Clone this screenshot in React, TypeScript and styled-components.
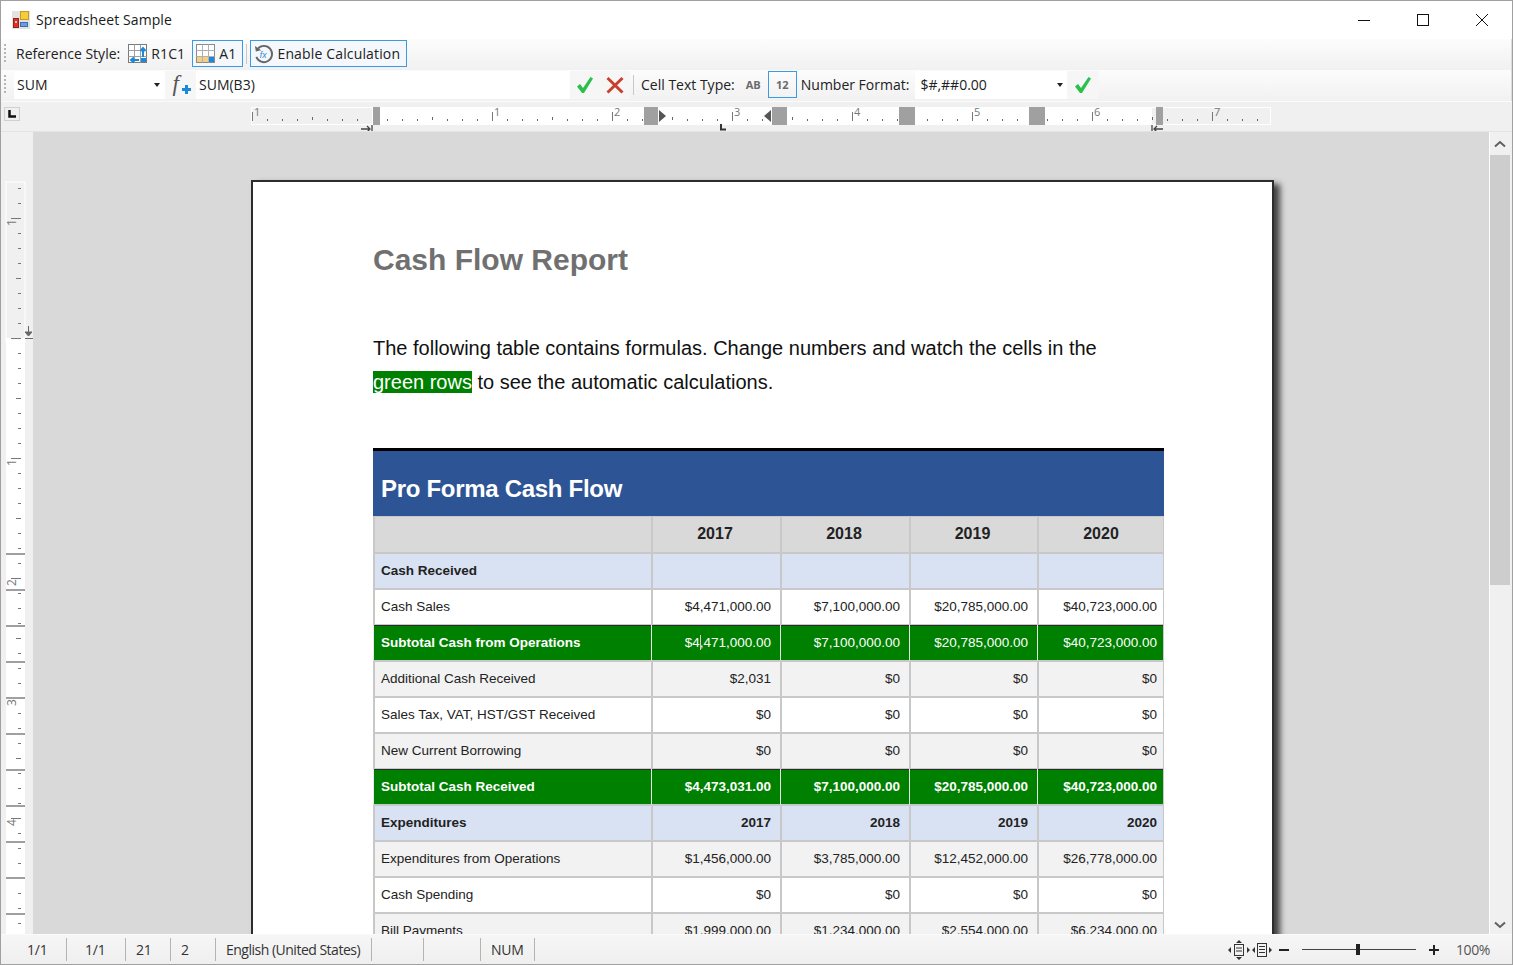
import React from 'react';
import styled, { createGlobalStyle } from 'styled-components';

const GlobalStyle = createGlobalStyle`
  html, body { margin: 0; padding: 0; height: 100%; overflow: hidden; }
  #root { height: 100%; }
`;

const UI_FONT = `"Open Sans", "Noto Sans", "Liberation Sans", sans-serif`;
const DOC_FONT = `"Liberation Sans", Arial, sans-serif`;

const Window = styled.div`
  width: 1513px;
  height: 965px;
  box-sizing: border-box;
  border: 1px solid #a0a0a0;
  display: flex;
  flex-direction: column;
  background: #f0f0f0;
  font-family: ${UI_FONT};
  overflow: hidden;
`;

const TitleBar = styled.div`
  height: 38px;
  flex: none;
  box-sizing: border-box;
  background: #fff;
  display: flex;
  align-items: center;
  padding: 0 1px 1px 11px;
  color: #1a1a1a;
  font-size: 14px;
`;

const TitleText = styled.span`
  margin-left: 6px;
  flex: 1;
  letter-spacing: 0.1px;
`;

const WinButton = styled.div`
  width: 59px;
  height: 37px;
  display: flex;
  align-items: center;
  justify-content: center;
`;

const Toolbar = styled.div`
  height: 31px;
  flex: none;
  box-sizing: border-box;
  display: flex;
  align-items: center;
  padding-bottom: 2px;
  background: linear-gradient(#fcfcfc, #f1f1f1);
  border-right: 1px solid #dcdcdc;
  color: #222;
  font-size: 14px;
  white-space: nowrap;
`;

const Grip = styled.div`
  width: 2px;
  height: 20px;
  margin: 0 8px 0 3px;
  flex: none;
  background: repeating-linear-gradient(#b5b5b5 0 2px, transparent 2px 4px);
`;

const ToolLabel = styled.span<{ $ml?: number; $mr?: number }>`
  margin-left: ${p => p.$ml ?? 0}px;
  margin-right: ${p => p.$mr ?? 0}px;
`;

const ToolButton = styled.div<{ $active?: boolean; $ml?: number }>`
  height: 27px;
  box-sizing: border-box;
  display: flex;
  align-items: center;
  gap: 3px;
  padding: 0 6px 0 2px;
  margin-left: ${p => p.$ml ?? 0}px;
  border: 1px solid ${p => (p.$active ? '#3a9ae2' : 'transparent')};
  background: ${p => (p.$active ? '#f4f8fc' : 'transparent')};
  letter-spacing: 0.15px;
`;

const Sep = styled.div<{ $mx?: number }>`
  width: 1px;
  height: 20px;
  background: #c8c8c8;
  margin: 0 ${p => p.$mx ?? 3}px;
  flex: none;
`;

const Field = styled.div<{ $w: number; $pr?: number }>`
  width: ${p => p.$w}px;
  height: 28px;
  flex: none;
  box-sizing: border-box;
  background: #fff;
  display: flex;
  align-items: center;
  justify-content: space-between;
  padding: 0 ${p => p.$pr ?? 4}px 0 3px;
`;

const Caret = styled.div`
  width: 0;
  height: 0;
  border-left: 3.5px solid transparent;
  border-right: 3.5px solid transparent;
  border-top: 4px solid #222;
`;

const IconSlot = styled.div<{ $w: number }>`
  width: ${p => p.$w}px;
  height: 28px;
  flex: none;
  display: flex;
  align-items: center;
  justify-content: center;
  background: #f6f6f6;
`;

const TypeButton = styled.div<{ $active?: boolean }>`
  width: 29px;
  height: 27px;
  box-sizing: border-box;
  display: flex;
  align-items: center;
  justify-content: center;
  color: #6a6a6a;
  font-size: 11px;
  font-weight: 700;
  border: 1px solid ${p => (p.$active ? '#3a9ae2' : 'transparent')};
`;

const RulerRow = styled.div`
  height: 31px;
  flex: none;
  display: flex;
  background: #f0f0f0;
  border-top: 1px solid #fbfbfb;
  border-bottom: 1px solid #e4e4e4;
  box-sizing: border-box;
`;

const TabStop = styled.div`
  width: 16px;
  height: 14px;
  margin: 5px 0 0 3px;
  box-sizing: border-box;
  border: 1px solid #fff;
  background: #f0f0f0;
  display: flex;
  align-items: center;
  justify-content: center;
  outline: 1px solid #d0d0d0;
  outline-offset: -1px;
`;

const Main = styled.div`
  flex: 1;
  min-height: 0;
  display: flex;
`;

const SideRuler = styled.div`
  width: 32px;
  flex: none;
  background: #f0f0f0;
`;

const Canvas = styled.div`
  flex: 1;
  min-width: 0;
  background: #d9d9d9;
  overflow: hidden;
  padding: 48px 0 0 218px;
`;

const Page = styled.div`
  width: 1023px;
  height: 1200px;
  box-sizing: border-box;
  background: #fff;
  border: 2px solid #2c2c2c;
  box-shadow: 6px 4px 6px rgba(0, 0, 0, 0.7);
  padding: 60px 108px 0 120px;
  font-family: ${DOC_FONT};
`;

const ReportTitle = styled.h1`
  margin: 0;
  color: #707070;
  font-size: 30px;
  line-height: 36px;
  font-weight: 700;
`;

const Intro = styled.p`
  margin: 53px 0 0;
  color: #111;
  font-size: 20px;
  line-height: 34px;
  width: 780px;
`;

const Highlight = styled.span`
  background: #008000;
  color: #fff;
`;

const Table = styled.div`
  margin-top: 49px;
  width: 791px;
  display: grid;
  grid-template-columns: 278px 129px 129px 128px 127px;
  border-top: 3px solid #000;
`;

const TableTitle = styled.div`
  grid-column: 1 / -1;
  height: 65px;
  box-sizing: border-box;
  background: #2d5494;
  color: #fff;
  font-size: 24px;
  font-weight: 700;
  padding: 22px 0 0 8px;
  line-height: 32px;
  letter-spacing: -0.3px;
`;

type Tone = 'head' | 'section' | 'plain' | 'alt' | 'total';

const toneBg: Record<Tone, string> = {
  head: '#d9d9d9',
  section: '#d9e2f3',
  plain: '#ffffff',
  alt: '#f2f2f2',
  total: '#008000',
};

const Cell = styled.div<{ $tone: Tone; $right?: boolean; $bold?: boolean; $center?: boolean; $last?: boolean }>`
  position: relative;
  height: ${p => (p.$tone === 'head' ? 37 : 36)}px;
  box-sizing: border-box;
  background: ${p => toneBg[p.$tone]};
  color: ${p => (p.$tone === 'total' ? '#fff' : '#222')};
  font-size: ${p => (p.$tone === 'head' ? 16 : 13.5)}px;
  font-weight: ${p => (p.$bold ? 700 : 400)};
  display: flex;
  align-items: center;
  justify-content: ${p => (p.$center ? 'center' : p.$right ? 'flex-end' : 'flex-start')};
  padding: 0 ${p => (p.$last ? 6 : 9)}px 0 7px;
  border-left: 1px solid ${p => (p.$tone === 'total' ? '#e8e8e8' : '#c8c8c8')};
  border-bottom: 1px solid #c8c8c8;
  border-right: ${p => (p.$last ? '1px solid #c8c8c8' : '0')};
  box-shadow: ${p => (p.$tone === 'total' ? 'inset 0 1px 0 #2c2c2c' : 'inset 1px 1px 0 #c8c8c8')};
  white-space: nowrap;
`;

const TextCursor = styled.div`
  position: absolute;
  left: 48px;
  top: 10px;
  width: 1px;
  height: 15px;
  background: #e8c0e0;
`;

const Scrollbar = styled.div`
  width: 20px;
  flex: none;
  margin-right: 2px;
  background: #f0f0f0;
  display: flex;
  flex-direction: column;
  border-left: 1px solid #fff;
`;

const ScrollArrow = styled.div<{ $h: number }>`
  height: ${p => p.$h}px;
  flex: none;
  display: flex;
  align-items: center;
  justify-content: center;
`;

const ScrollThumb = styled.div`
  height: 430px;
  flex: none;
  background: #cdcdcd;
`;

const ScrollRest = styled.div`
  flex: 1;
`;

const StatusBar = styled.div`
  height: 29px;
  flex: none;
  display: flex;
  align-items: center;
  background: linear-gradient(#f6f6f6, #efefef);
  border-top: 1px solid #fafafa;
  color: #333;
  font-size: 14px;
  letter-spacing: -0.2px;
`;

const StatusCell = styled.div<{ $w: number; $pl?: number; $narrow?: boolean }>`
  width: ${p => p.$w}px;
  height: 23px;
  box-sizing: border-box;
  flex: none;
  border-right: 1px solid #b4b4b4;
  display: flex;
  align-items: center;
  padding-left: ${p => p.$pl ?? 10}px;
  white-space: nowrap;
  letter-spacing: ${p => (p.$narrow ? -0.5 : -0.2)}px;
`;

const StatusRight = styled.div`
  margin-left: auto;
  display: flex;
  align-items: center;
  padding-right: 22px;
`;

const FitPageSvg = styled.svg`
  margin-right: 2px;
`;

const ZoomMinus = styled.svg`
  margin-left: 6px;
`;

const ZoomTrack = styled.div`
  position: relative;
  width: 114px;
  height: 1px;
  background: #444;
  margin: 0 12px 0 12px;
`;

const ZoomThumb = styled.div`
  position: absolute;
  left: 54px;
  top: -5px;
  width: 4px;
  height: 11px;
  background: #222;
`;

const ZoomValue = styled.span`
  margin-left: 16px;
  color: #555;
  letter-spacing: -0.4px;
`;

const AppIcon = () => (
  <svg width="18" height="18" viewBox="0 0 18 18">
    <rect x="0" y="0" width="18" height="18" fill="#e2e2e2" />
    <rect x="8.500" y="0.500" width="8" height="8" fill="#f6cb3c" stroke="#c89a20" />
    <rect x="1.500" y="7.500" width="5" height="9" fill="#d8342a" stroke="#9c2018" />
    <rect x="3" y="10" width="2" height="2" fill="#f3c0b8" />
    <rect x="8.500" y="11.500" width="7" height="4" fill="#6f9ce0" stroke="#3d6cb0" />
  </svg>
);

const R1C1Icon = () => (
  <svg width="21" height="21" viewBox="0 0 21 21">
    <rect x="1.500" y="1.500" width="18" height="18" fill="#fff" stroke="#7a7a7a" />
    <path d="M1.500 7.500h18M1.500 13.500h18M7.500 1.500v18M13.500 1.500v18" stroke="#a0a0a0" />
    <path d="M16 14V6M13.500 8L16 5l2.500 3" stroke="#1e88d8" strokeWidth="2" fill="none" />
    <path d="M12 17H4M7 14.500L4 17l3 2.500" stroke="#1e88d8" strokeWidth="2" fill="none" />
    <rect x="14" y="15" width="5" height="4" fill="#1e88d8" />
  </svg>
);

const A1Icon = () => (
  <svg width="21" height="21" viewBox="0 0 21 21">
    <rect x="1.500" y="1.500" width="18" height="18" fill="#fff" stroke="#8a8a8a" />
    <rect x="2" y="14" width="6" height="5" fill="#f4cf80" />
    <rect x="8" y="14" width="5" height="5" fill="#f4cf80" />
    <rect x="14" y="14" width="5" height="5" fill="#1e88d8" />
    <path d="M1.500 7.500h18M1.500 13.500h18M7.500 1.500v18M13.500 1.500v18" stroke="#b0b0b0" />
  </svg>
);

const CalcIcon = () => (
  <svg width="21" height="22" viewBox="0 0 22 22">
    <path d="M5 5.500A8.500 8.500 0 1 1 3.500 14" fill="none" stroke="#666" strokeWidth="2" />
    <path d="M2 2.500l1 6 5.500-1.500z" fill="#666" />
    <text x="7" y="15" fontFamily={DOC_FONT} fontSize="9" fontStyle="italic" fill="#1e88d8">fx</text>
  </svg>
);

const FxIcon = () => (
  <svg width="24" height="26" viewBox="0 0 24 26">
    <text x="3.500" y="19" fontFamily={`"Liberation Serif", serif`} fontSize="23" fontStyle="italic" fill="#555">f</text>
    <path d="M13 16h3v-3h3v3h3v3h-3v3h-3v-3h-3z" fill="#1e88d8" />
  </svg>
);

const Check = () => (
  <svg width="18" height="18" viewBox="0 0 18 18">
    <path d="M1 10.500L4 8l3 4L14.500 1 17 2.500 8 17H6z" fill="#2ac04a" />
  </svg>
);

const Cross = () => (
  <svg width="18" height="18" viewBox="0 0 18 18">
    <path d="M1.500 2L16.500 16.500M16.500 2L1.500 16.500" stroke="#c8402c" strokeWidth="3" />
  </svg>
);

const HRuler = () => {
  const dots: number[] = [];
  for (let x = 252; x < 1272; x += 15) if ((x - 372) % 120 !== 0) dots.push(x);
  const labels = [[252, '1'], [492, '1'], [612, '2'], [732, '3'], [852, '4'], [972, '5'], [1092, '6'], [1212, '7']] as const;
  const blocks = [[373, 7], [644, 14], [772, 15], [899, 16], [1029, 16], [1156, 7]];
  // svg starts at x=20 of the window (1px border + tab button)
  return (
    <svg width="1490" height="29" viewBox="20 102 1490 29">
      <rect x="251.500" y="107.500" width="1019" height="17" fill="#f0f0f0" stroke="#fff" />
      <rect x="372" y="107" width="780" height="18" fill="#fff" />
      {dots.map(x => (
        <rect key={x} x={x} y={(x - 372) % 60 === 0 ? 117 : 119} width="1" height={(x - 372) % 60 === 0 ? 3 : 2} fill="#666" />
      ))}
      {labels.map(([x, t], i) => (
        <g key={i}>
          <rect x={x} y="112" width="1" height="9" fill="#777" />
          <text x={x + 2} y="116" fontSize="11" fontFamily={UI_FONT} fill="#777">{t}</text>
        </g>
      ))}
      {blocks.map(([x, w]) => (
        <rect key={x} x={x} y="107" width={w} height="18" fill="#a0a0a0" />
      ))}
      <path d="M659 110l7 6-7 6z" fill="#555" />
      <path d="M771 110l-7 6 7 6z" fill="#555" />
      <path d="M361 129h9m-3-3l3 3-3 3M372 125v7" stroke="#444" strokeWidth="1.300" fill="none" />
      <path d="M1163 129h-9m3-3l-3 3 3 3M1152 125v7" stroke="#444" strokeWidth="1.300" fill="none" />
      <path d="M721 124v5.500h5" stroke="#333" strokeWidth="2" fill="none" />
    </svg>
  );
};

const VRuler = () => {
  const ticks: number[] = [];
  for (let y = 188; y <= 935; y += 15) ticks.push(y);
  const rowLines = [553, 589, 625, 661, 697, 733, 769, 805, 841, 877, 913];
  const labels = [[222, '1'], [462, '1'], [582, '2'], [702, '3'], [822, '4']] as const;
  return (
    <svg width="32" height="803" viewBox="1 132 32 803">
      <rect x="6" y="182" width="19" height="160" fill="#f0f0f0" stroke="#fff" />
      <rect x="6" y="338" width="19" height="600" fill="#fff" />
      {ticks.map(y => {
        const k = (y - 338) % 120 === 0 ? 'major' : (y - 338) % 60 === 0 ? 'mid' : 'minor';
        const x = k === 'major' ? 11 : k === 'mid' ? 16 : 18;
        return <rect key={y} x={x} y={y} width={21 - x} height="1" fill="#777" />;
      })}
      {labels.map(([y, t]) => (
        <text key={y} x="0" y="0" fontSize="12" fontFamily={UI_FONT} fill="#777" transform={`translate(16 ${y + 4}) rotate(-90)`}>{t}</text>
      ))}
      {rowLines.map(y => (
        <rect key={y} x="6" y={y} width="19" height="2" fill="#a0a0a0" />
      ))}
      <path d="M28.500 326v8M25 332h7l-3.500 4zM25 338.500h8" stroke="#666" fill="#666" />
    </svg>
  );
};

const Chevron = ({ up }: { up?: boolean }) => (
  <svg width="12" height="8" viewBox="0 0 12 8">
    <path d={up ? 'M1 6.500L6 2l5 4.500' : 'M1 1.500L6 6l5-4.500'} stroke="#606060" strokeWidth="2" fill="none" />
  </svg>
);

const FitPageIcon = () => (
  <FitPageSvg width="22" height="20" viewBox="0 0 22 20">
    <rect x="6.500" y="4.500" width="9" height="11" fill="none" stroke="#333" />
    <path d="M8 8h6M8 11h6" stroke="#333" />
    <path d="M11 0l3 3H8zM11 20l3-3H8zM0 10l3-3v6zM22 10l-3-3v6z" fill="#333" />
  </FitPageSvg>
);

const FitWidthIcon = () => (
  <svg width="20" height="16" viewBox="0 0 20 16">
    <rect x="5.500" y="1.500" width="9" height="13" fill="none" stroke="#333" />
    <path d="M7 4.500h6M7 7.500h6M7 10.500h6" stroke="#333" />
    <path d="M0 8l3-3v6zM20 8l-3-3v6z" fill="#333" />
  </svg>
);

type Row = { tone: Tone; label: string; values: string[]; boldLabel?: boolean; boldValues?: boolean; cursor?: boolean };

const rows: Row[] = [
  { tone: 'section', label: 'Cash Received', values: ['', '', '', ''], boldLabel: true },
  { tone: 'plain', label: 'Cash Sales', values: ['$4,471,000.00', '$7,100,000.00', '$20,785,000.00', '$40,723,000.00'] },
  { tone: 'total', label: 'Subtotal Cash from Operations', values: ['$4,471,000.00', '$7,100,000.00', '$20,785,000.00', '$40,723,000.00'], boldLabel: true, cursor: true },
  { tone: 'alt', label: 'Additional Cash Received', values: ['$2,031', '$0', '$0', '$0'] },
  { tone: 'plain', label: 'Sales Tax, VAT, HST/GST Received', values: ['$0', '$0', '$0', '$0'] },
  { tone: 'alt', label: 'New Current Borrowing', values: ['$0', '$0', '$0', '$0'] },
  { tone: 'total', label: 'Subtotal Cash Received', values: ['$4,473,031.00', '$7,100,000.00', '$20,785,000.00', '$40,723,000.00'], boldLabel: true, boldValues: true },
  { tone: 'section', label: 'Expenditures', values: ['2017', '2018', '2019', '2020'], boldLabel: true, boldValues: true },
  { tone: 'alt', label: 'Expenditures from Operations', values: ['$1,456,000.00', '$3,785,000.00', '$12,452,000.00', '$26,778,000.00'] },
  { tone: 'plain', label: 'Cash Spending', values: ['$0', '$0', '$0', '$0'] },
  { tone: 'alt', label: 'Bill Payments', values: ['$1,999,000.00', '$1,234,000.00', '$2,554,000.00', '$6,234,000.00'] },
];

export default function App() {
  return (
    <>
      <GlobalStyle />
      <Window>
        <TitleBar>
          <AppIcon />
          <TitleText>Spreadsheet Sample</TitleText>
          <WinButton>
            <svg width="12" height="12" viewBox="0 0 12 12"><path d="M0 6.500h12" stroke="#111" /></svg>
          </WinButton>
          <WinButton>
            <svg width="12" height="12" viewBox="0 0 12 12"><rect x="0.500" y="0.500" width="11" height="11" fill="none" stroke="#111" /></svg>
          </WinButton>
          <WinButton>
            <svg width="12" height="12" viewBox="0 0 12 12"><path d="M0 0l12 12M12 0L0 12" stroke="#111" /></svg>
          </WinButton>
        </TitleBar>
        <Toolbar>
          <Grip />
          <ToolLabel $ml={2} $mr={4}>Reference Style:</ToolLabel>
          <ToolButton><R1C1Icon />R1C1</ToolButton>
          <ToolButton $active><A1Icon />A1</ToolButton>
          <Sep $mx={3} />
          <ToolButton $active><CalcIcon />Enable Calculation</ToolButton>
        </Toolbar>
        <Toolbar>
          <Grip />
          <Field $w={151} $pr={5}><ToolLabel>SUM</ToolLabel><Caret /></Field>
          <IconSlot $w={31}><FxIcon /></IconSlot>
          <Field $w={374}><ToolLabel>SUM(B3)</ToolLabel></Field>
          <IconSlot $w={30}><Check /></IconSlot>
          <IconSlot $w={30}><Cross /></IconSlot>
          <Sep $mx={3} />
          <ToolLabel $ml={4} $mr={4}>Cell Text Type:</ToolLabel>
          <TypeButton>AB</TypeButton>
          <TypeButton $active>12</TypeButton>
          <ToolLabel $ml={4} $mr={6}>Number Format:</ToolLabel>
          <Field $w={152}><ToolLabel $ml={2}>$#,##0.00</ToolLabel><Caret /></Field>
          <IconSlot $w={32}><Check /></IconSlot>
        </Toolbar>
        <RulerRow>
          <TabStop>
            <svg width="8" height="8" viewBox="0 0 8 8"><path d="M1.500 0v6.500H8" stroke="#111" strokeWidth="2.500" fill="none" /></svg>
          </TabStop>
          <HRuler />
        </RulerRow>
        <Main>
          <SideRuler><VRuler /></SideRuler>
          <Canvas>
            <Page>
              <ReportTitle>Cash Flow Report</ReportTitle>
              <Intro>
                The following table contains formulas. Change numbers and watch the cells in the{' '}
                <Highlight>green rows</Highlight> to see the automatic calculations.
              </Intro>
              <Table>
                <TableTitle>Pro Forma Cash Flow</TableTitle>
                <Cell $tone="head" />
                {['2017', '2018', '2019', '2020'].map((y, i) => (
                  <Cell key={y} $tone="head" $bold $center $last={i === 3}>{y}</Cell>
                ))}
                {rows.map(r => (
                  <React.Fragment key={r.label}>
                    <Cell $tone={r.tone} $bold={r.boldLabel}>{r.label}</Cell>
                    {r.values.map((v, i) => (
                      <Cell key={i} $tone={r.tone} $right $bold={r.boldValues} $last={i === 3}>
                        {v}
                        {r.cursor && i === 0 && <TextCursor />}
                      </Cell>
                    ))}
                  </React.Fragment>
                ))}
              </Table>
            </Page>
          </Canvas>
          <Scrollbar>
            <ScrollArrow $h={23}><Chevron up /></ScrollArrow>
            <ScrollThumb />
            <ScrollRest />
            <ScrollArrow $h={19}><Chevron /></ScrollArrow>
          </Scrollbar>
        </Main>
        <StatusBar>
          <StatusCell $w={66} $pl={26}>1/1</StatusCell>
          <StatusCell $w={59} $pl={18}>1/1</StatusCell>
          <StatusCell $w={45}>21</StatusCell>
          <StatusCell $w={45}>2</StatusCell>
          <StatusCell $w={156} $narrow>English (United States)</StatusCell>
          <StatusCell $w={52} />
          <StatusCell $w={57} />
          <StatusCell $w={54}>NUM</StatusCell>
          <StatusRight>
            <FitPageIcon />
            <FitWidthIcon />
            <ZoomMinus width="12" height="12" viewBox="0 0 12 12"><path d="M1 6h10" stroke="#222" strokeWidth="2" /></ZoomMinus>
            <ZoomTrack><ZoomThumb /></ZoomTrack>
            <svg width="12" height="12" viewBox="0 0 12 12"><path d="M1 6h10M6 1v10" stroke="#222" strokeWidth="2" /></svg>
            <ZoomValue>100%</ZoomValue>
          </StatusRight>
        </StatusBar>
      </Window>
    </>
  );
}
